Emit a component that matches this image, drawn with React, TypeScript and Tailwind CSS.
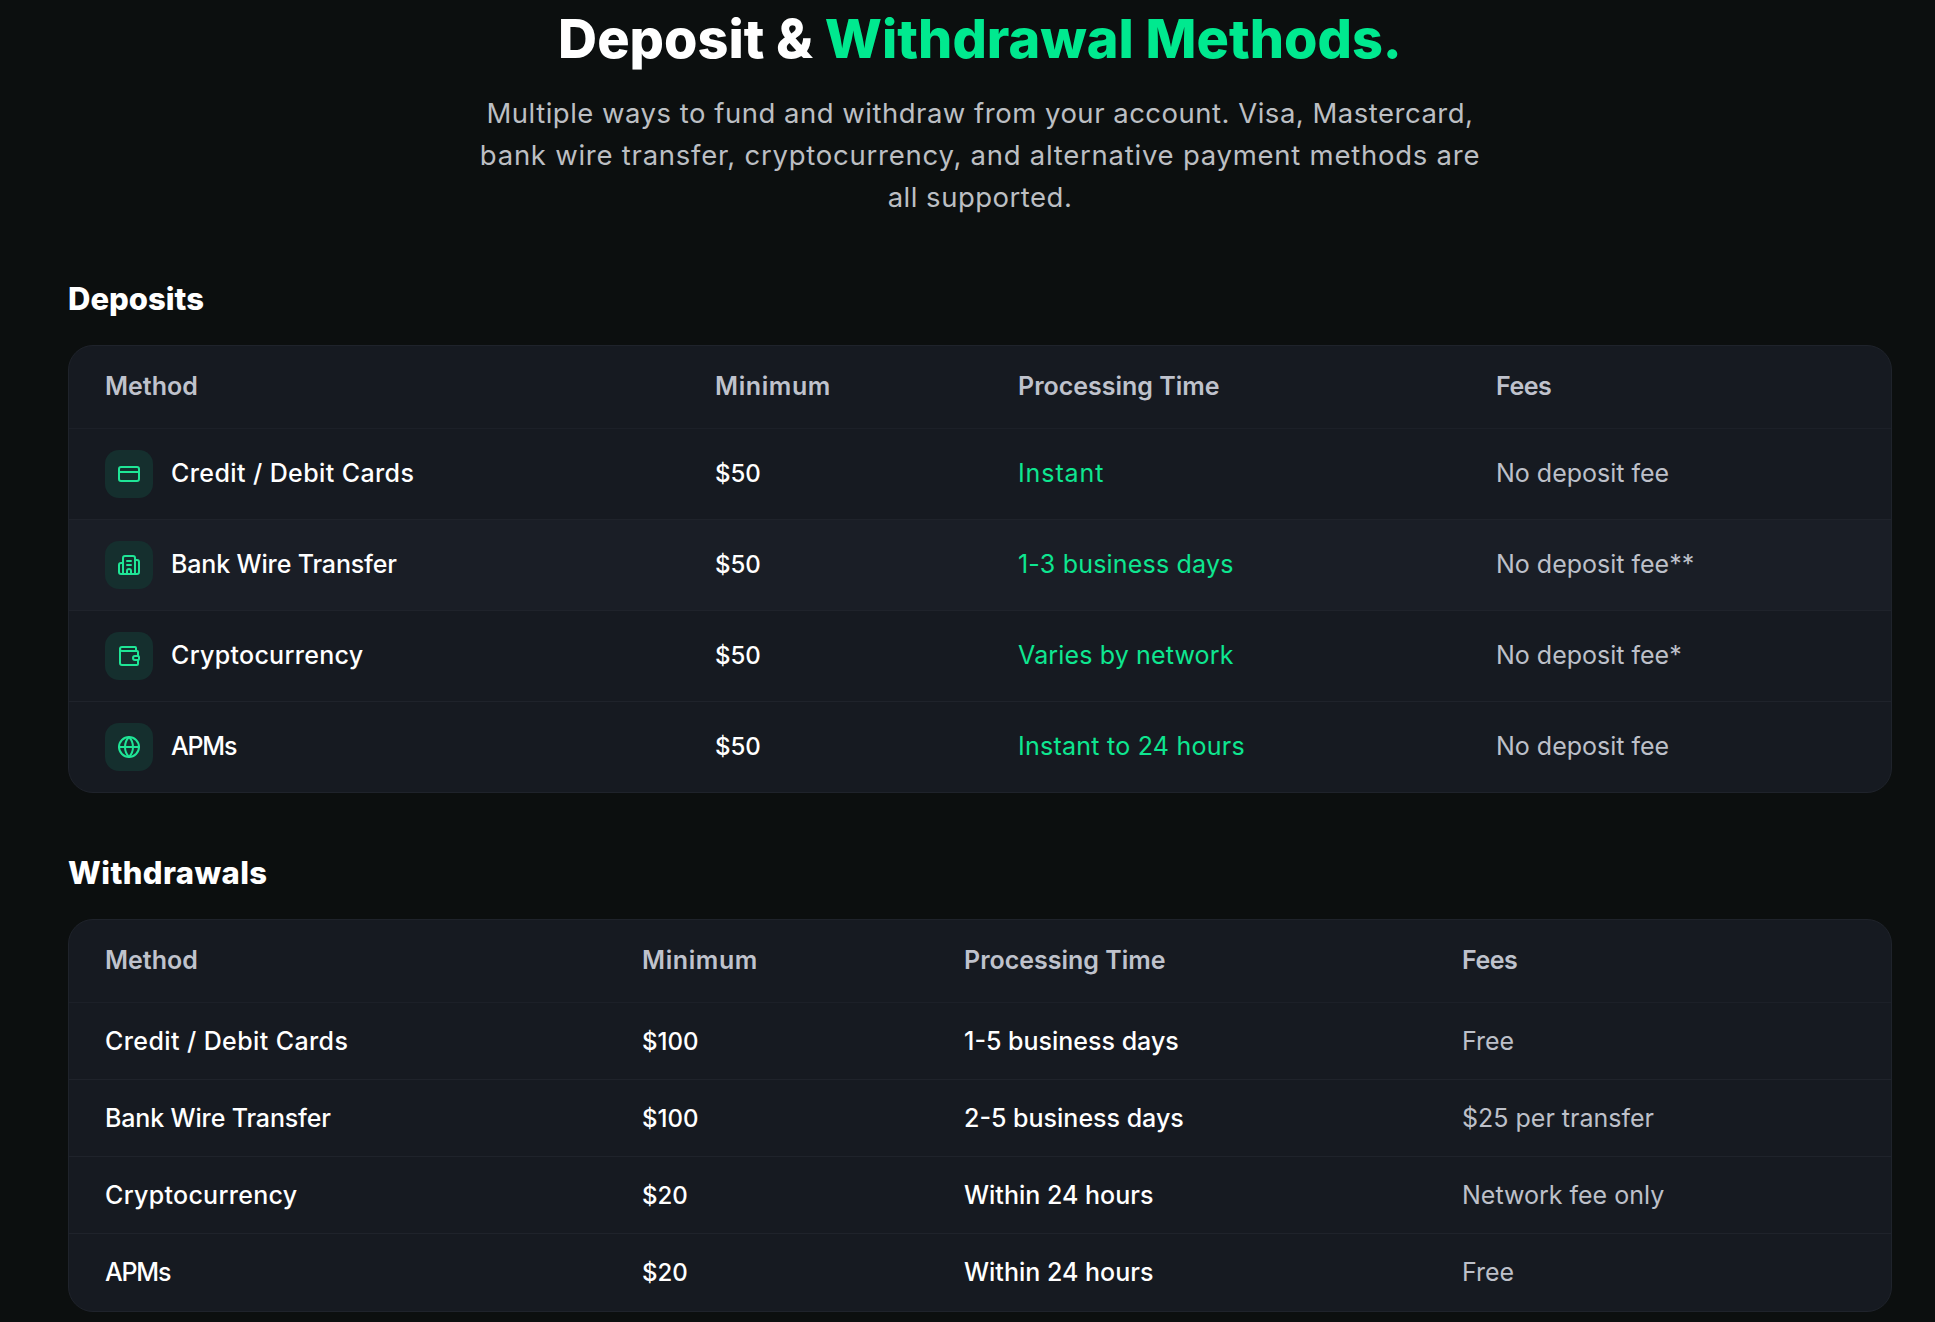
import { CreditCard, Building2, Wallet, Globe } from "lucide-react";

const deposits = [
  { m: "Credit / Debit Cards", tr: "tracking-[0.4px]", min: "$50", t: "Instant", tt: "tracking-[0.9px]", f: "No deposit fee", I: CreditCard },
  { m: "Bank Wire Transfer", tr: "tracking-[-0.15px]", min: "$50", t: "1-3 business days", tt: "tracking-[0.2px]", f: "No deposit fee**", I: Building2 },
  { m: "Cryptocurrency", tr: "tracking-[0.3px]", min: "$50", t: "Varies by network", tt: "tracking-[0.15px]", f: "No deposit fee*", I: Wallet },
  { m: "APMs", tr: "tracking-[-1.2px]", min: "$50", t: "Instant to 24 hours", tt: "tracking-[0.25px]", f: "No deposit fee", I: Globe },
];
const withdrawals = [
  { m: "Credit / Debit Cards", tr: "tracking-[0.4px]", min: "$100", t: "1-5 business days", f: "Free" },
  { m: "Bank Wire Transfer", tr: "tracking-[-0.15px]", min: "$100", t: "2-5 business days", f: "$25 per transfer" },
  { m: "Cryptocurrency", tr: "tracking-[0.3px]", min: "$20", t: "Within 24 hours", f: "Network fee only" },
  { m: "APMs", tr: "tracking-[-1.2px]", min: "$20", t: "Within 24 hours", f: "Free" },
];

function Head({ cols }: { cols: string }) {
  return (
    <div className={`grid h-[83px] ${cols} items-center border-b border-[#1c2028] pl-[36px] text-[25px] font-semibold text-[#bfc2cc]`}>
      <div>Method</div>
      <div className="tracking-[0.6px]">Minimum</div>
      <div>Processing Time</div>
      <div className="tracking-[-0.5px]">Fees</div>
    </div>
  );
}

export default function App() {
  return (
    <div className="min-h-[1322px] bg-[#0c0f0f] pl-[68px] pr-[43px] text-white overflow-hidden font-['Inter',sans-serif]">
      <h1 className="text-center text-[54px] leading-[77px] font-extrabold tracking-[0px]">
        Deposit &amp; <span className="text-[#00e98f]">Withdrawal Methods.</span>
      </h1>
      <p className="mx-auto mt-[15px] w-[1010px] text-center text-[27.5px] leading-[42px] tracking-[0.5px] text-[#bcbfc3]">
        Multiple ways to fund and withdraw from your account. Visa, Mastercard, <span className="tracking-[0.75px]">bank wire transfer, cryptocurrency, and alternative payment methods are</span> all supported.
      </p>

      <h2 className="mt-[59px] text-[31px] leading-[44px] font-extrabold">Deposits</h2>
      <div className="mt-[24px] rounded-[25px] border border-[#1f232b] bg-[#161a21] overflow-hidden">
        <Head cols="grid-cols-[610px_303px_478px_1fr]" />
        {deposits.map((r, i) => (
          <div key={r.m} className={`grid grid-cols-[610px_303px_478px_1fr] items-center pl-[36px] text-[25px] ${i < 3 ? "h-[91px] border-b border-[#1f232b]" : "h-[90px]"} ${i === 1 ? "bg-[#1a1e26]" : ""}`}>
            <div className="flex items-center gap-[18px] font-medium">
              <div className="flex h-[48px] w-[48px] items-center justify-center rounded-[14px] bg-[#152f2e] text-[#1fe596]">
                <r.I size={24} strokeWidth={2} />
              </div>
              <span className={r.tr}>{r.m}</span>
            </div>
            <div className="font-medium text-[24px]">{r.min}</div>
            <div className={`text-[#0ee690] ${r.tt}`}>{r.t}</div>
            <div className="text-[#bdc0c9]">{r.f}</div>
          </div>
        ))}
      </div>

      <h2 className="mt-[58px] text-[31px] leading-[44px] font-extrabold tracking-[0.4px]">Withdrawals</h2>
      <div className="mt-[24px] rounded-[25px] border border-[#1f232b] bg-[#161a21] overflow-hidden">
        <Head cols="grid-cols-[537px_322px_498px_1fr]" />
        {withdrawals.map((r, i) => (
          <div key={r.m} className={`grid h-[77px] grid-cols-[537px_322px_498px_1fr] items-center pl-[36px] pt-[1px] text-[25px] ${i < 3 ? "border-b border-[#1f232b]" : ""}`}>
            <div className={`font-medium ${r.tr}`}>{r.m}</div>
            <div className="font-medium text-[24px]">{r.min}</div>
            <div className="font-medium">{r.t}</div>
            <div className="text-[#bdc0c9]">{r.f}</div>
          </div>
        ))}
      </div>
    </div>
  );
}
